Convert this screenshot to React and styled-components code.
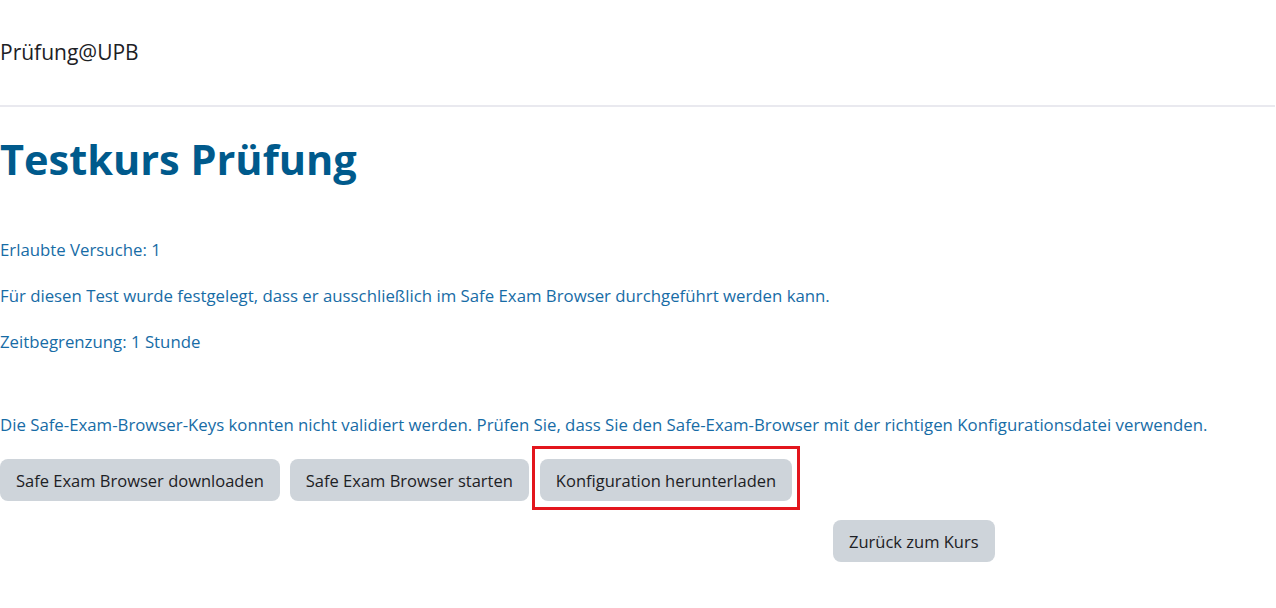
import React from "react";
import styled, { createGlobalStyle } from "styled-components";

const GlobalStyle = createGlobalStyle`
  html, body {
    margin: 0;
    padding: 0;
    background: #fff;
  }
  body {
    font-family: "Open Sans", "Noto Sans", sans-serif;
    font-size: 16.8px;
    color: #1d2125;
  }
`;

const Page = styled.div`
  width: 1276px;
  height: 608px;
  overflow: hidden;
`;

const Navbar = styled.header`
  height: 105px;
  display: flex;
  align-items: center;
  border-bottom: 2px solid #e9e9ef;
  width: 1275px;
`;

const Brand = styled.div`
  font-size: 21px;
  color: #1d2125;
  margin-top: -2px;
`;

const Main = styled.main`
  padding-top: 26px;
`;

const Title = styled.h1`
  margin: 0;
  font-size: 41.5px;
  font-weight: 700;
  line-height: 52px;
  color: #005a8c;
`;

const Info = styled.div`
  margin-top: 53px;
  display: flex;
  flex-direction: column;
  gap: 22px;
`;

const Line = styled.p`
  margin: 0;
  line-height: 24px;
  color: #176ca6;
  margin-top: ${(p) => (p.$spaced ? "37px" : "0")};
`;

const ButtonRow = styled.div`
  display: flex;
  align-items: center;
  gap: 10px;
  margin-top: 22px;
`;

const Button = styled.button`
  font-family: inherit;
  font-size: 16.5px;
  color: #1d2125;
  background: #ced4da;
  border: none;
  border-radius: 8px;
  height: 42px;
  padding: 0 16px;
  cursor: pointer;
`;

const Highlight = styled.div`
  position: relative;
  display: flex;
  margin-left: 1px;

  &::after {
    content: "";
    position: absolute;
    top: -13px;
    bottom: -9px;
    left: -8px;
    right: -8px;
    border: 3px solid #e3161d;
    pointer-events: none;
  }
`;

const BackRow = styled.div`
  display: flex;
  padding-left: 833px;
  margin-top: 19px;
`;

export default function App() {
  return (
    <Page>
      <GlobalStyle />
      <Navbar>
        <Brand>Prüfung@UPB</Brand>
      </Navbar>
      <Main>
        <Title>Testkurs Prüfung</Title>
        <Info>
          <Line>Erlaubte Versuche: 1</Line>
          <Line>
            Für diesen Test wurde festgelegt, dass er ausschließlich im Safe Exam Browser durchgeführt werden kann.
          </Line>
          <Line>Zeitbegrenzung: 1 Stunde</Line>
          <Line $spaced>
            Die Safe-Exam-Browser-Keys konnten nicht validiert werden. Prüfen Sie, dass Sie den Safe-Exam-Browser mit der richtigen Konfigurationsdatei verwenden.
          </Line>
        </Info>
        <ButtonRow>
          <Button>Safe Exam Browser downloaden</Button>
          <Button>Safe Exam Browser starten</Button>
          <Highlight>
            <Button>Konfiguration herunterladen</Button>
          </Highlight>
        </ButtonRow>
        <BackRow>
          <Button>Zurück zum Kurs</Button>
        </BackRow>
      </Main>
    </Page>
  );
}
